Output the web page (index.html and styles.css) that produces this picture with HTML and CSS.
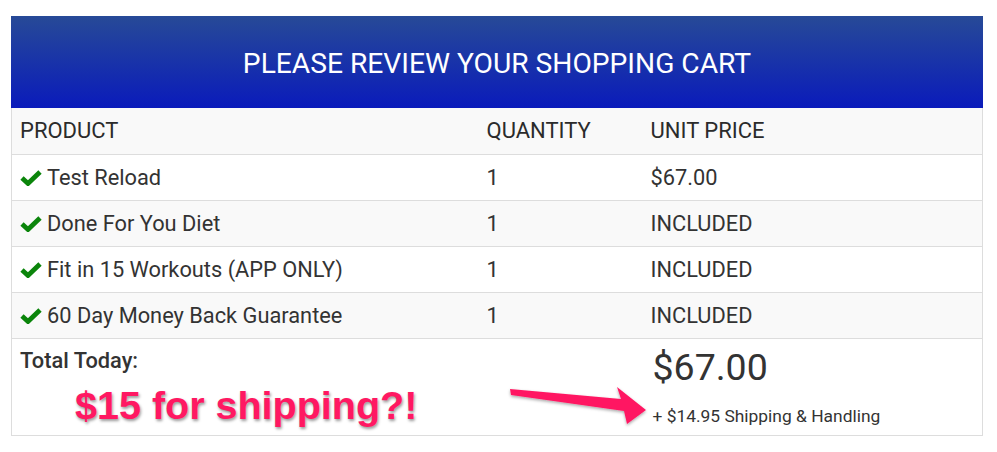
FILE: index.html
```html
<!DOCTYPE html>
<html>
<head>
<meta charset="utf-8">
<link rel="stylesheet" href="styles.css">
</head>
<body>
<div class="page">
  <div class="cart">
    <div class="cart-title">PLEASE REVIEW YOUR SHOPPING CART</div>
    <table class="cart-table">
      <colgroup><col class="c-prod"><col class="c-qty"><col class="c-price"></colgroup>
      <thead>
        <tr class="row-alt"><th>PRODUCT</th><th>QUANTITY</th><th>UNIT PRICE</th></tr>
      </thead>
      <tbody>
        <tr><td><span class="check"><svg viewBox="0 0 22 16" width="22" height="16"><path d="M2 8 L8 13.5 L20 2" fill="none" stroke="#0b850b" stroke-width="4.8"/></svg></span>Test Reload</td><td>1</td><td>$67.00</td></tr>
        <tr class="row-alt"><td><span class="check"><svg viewBox="0 0 22 16" width="22" height="16"><path d="M2 8 L8 13.5 L20 2" fill="none" stroke="#0b850b" stroke-width="4.8"/></svg></span>Done For You Diet</td><td>1</td><td>INCLUDED</td></tr>
        <tr><td><span class="check"><svg viewBox="0 0 22 16" width="22" height="16"><path d="M2 8 L8 13.5 L20 2" fill="none" stroke="#0b850b" stroke-width="4.8"/></svg></span>Fit in 15 Workouts (APP ONLY)</td><td>1</td><td>INCLUDED</td></tr>
        <tr class="row-alt"><td><span class="check"><svg viewBox="0 0 22 16" width="22" height="16"><path d="M2 8 L8 13.5 L20 2" fill="none" stroke="#0b850b" stroke-width="4.8"/></svg></span>60 Day Money Back Guarantee</td><td>1</td><td>INCLUDED</td></tr>
        <tr class="total-row">
          <td class="total-label">Total Today:</td>
          <td></td>
          <td class="total-cell">
            <div class="total-amount">$67.00</div>
            <div class="shipping">+ $14.95 Shipping &amp; Handling</div>
          </td>
        </tr>
      </tbody>
    </table>
  </div>
  <div class="callout">$15 for shipping?!</div>
  <svg class="arrow" width="997" height="452" viewBox="0 0 997 452">
    <defs>
      <filter id="sh" x="-10%" y="-50%" width="120%" height="200%">
        <feDropShadow dx="0" dy="1.5" stdDeviation="1.5" flood-color="#000" flood-opacity="0.35"/>
      </filter>
    </defs>
    <polygon points="510,389 621,399 617,387 646,410 627,424 624,411 511,395" fill="#ff1862" filter="url(#sh)"/>
  </svg>
</div>
</body>
</html>
```
FILE: styles.css
```css
* { box-sizing: border-box; }
html, body { margin: 0; padding: 0; background: #fff; }
body { font-family: Roboto, "Noto Sans", sans-serif; color: #333; }
.page { position: relative; width: 997px; height: 452px; padding: 16px 14px 0 11px; }
.cart { width: 972px; }
.cart-title {
  height: 92px;
  display: flex; align-items: center; justify-content: center;
  background: linear-gradient(to bottom, #274a97 0%, #0a1bbb 100%);
  color: #fff; font-size: 28.2px;
  padding-top: 2px;
}
.cart-table { width: 972px; border-collapse: collapse; table-layout: fixed; font-size: 21.8px; }
.c-prod { width: 467px; }
.c-qty { width: 164px; }
.cart-table th, .cart-table td {
  border-top: 1px solid #ddd; height: 46px; padding: 0 8px;
  text-align: left; vertical-align: middle; font-weight: 400; color: #333;
}
.cart-table th { font-size: 22px; color: #2b2b2b; }
.cart-table th:first-child, .cart-table td:first-child { border-left: 1px solid #ddd; }
.cart-table th:last-child, .cart-table td:last-child { border-right: 1px solid #ddd; }
.cart-table thead th { border-top: none; }
.row-alt { background: #f9f9f9; }
.check { display: inline-block; width: 27px; vertical-align: -1px; }
.check svg { display: block; }
.cart-table .total-row td { vertical-align: top; height: 97px; border-bottom: 1px solid #ddd; }
.cart-table .total-row .total-label { font-size: 21.8px; font-weight: 500; padding-top: 9px; }
.cart-table .total-row .total-cell { padding-top: 6px; padding-left: 10px; }
.total-amount { font-size: 37.5px; line-height: 44px; }
.shipping { font-size: 17.4px; margin-top: 17px; color: #333; }
.callout {
  position: absolute; left: 75px; top: 383px;
  font-family: "Liberation Sans", Arial, sans-serif; font-weight: 700;
  font-size: 39.5px; line-height: 44px; color: #ff1862;
  -webkit-text-stroke: 5px #fff; paint-order: stroke fill;
  text-shadow: 1px 2px 3px rgba(0,0,0,0.4);
}
.arrow { position: absolute; left: 0; top: 0; pointer-events: none; }
```
